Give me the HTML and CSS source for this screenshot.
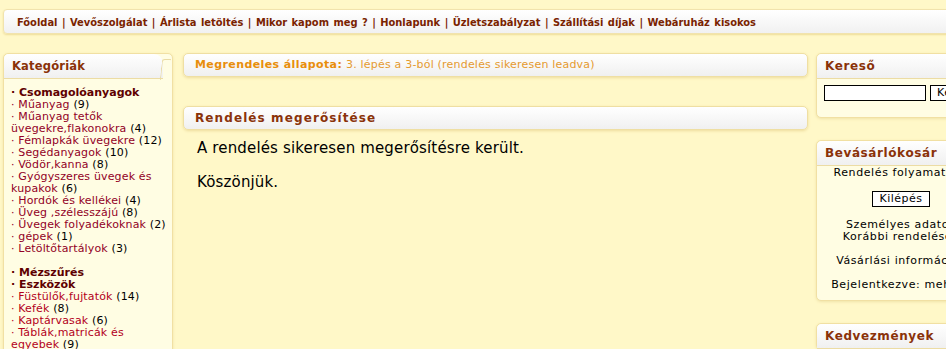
FILE: index.html
```html
<!DOCTYPE html>
<html lang="hu">
<head>
    <meta charset="UTF-8">
    <title>Rendelés megerősítése</title>
    <link rel="stylesheet" href="styles.css">
</head>
<body>
    <div class="topnav">
        <a href="#">Főoldal</a> |
        <a href="#">Vevőszolgálat</a> |
        <a href="#">Árlista letöltés</a> |
        <a href="#">Mikor kapom meg ?</a> |
        <a href="#">Honlapunk</a> |
        <a href="#">Üzletszabályzat</a> |
        <a href="#">Szállítási díjak</a> |
        <a href="#">Webáruház kisokos</a>
    </div>

    <div class="page">
        <!-- Left column -->
        <div class="col-left">
            <div class="box">
                <div class="box-head tab">Kategóriák</div>
                <ul class="cats">
                    <li class="main">· Csomagolóanyagok</li>
                    <li><a href="#">· Műanyag</a> (9)</li>
                    <li><a href="#">· Műanyag tetők üvegekre,flakonokra</a> (4)</li>
                    <li><a href="#">· Fémlapkák üvegekre</a> (12)</li>
                    <li><a href="#">· Segédanyagok</a> (10)</li>
                    <li><a href="#">· Vödör,kanna</a> (8)</li>
                    <li><a href="#">· Gyógyszeres üvegek és kupakok</a> (6)</li>
                    <li><a href="#">· Hordók és kellékei</a> (4)</li>
                    <li><a href="#">· Üveg ,szélesszájú</a> (8)</li>
                    <li><a href="#">· Üvegek folyadékoknak</a> (2)</li>
                    <li><a href="#">· gépek</a> (1)</li>
                    <li><a href="#">· Letöltőtartályok</a> (3)</li>
                    <li class="main spaced">· Mézszűrés</li>
                    <li class="main">· Eszközök</li>
                    <li><a href="#" class="red">· Füstülők,fujtatók</a> (14)</li>
                    <li><a href="#" class="red">· Kefék</a> (8)</li>
                    <li><a href="#" class="red">· Kaptárvasak</a> (6)</li>
                    <li><a href="#" class="red">· Táblák,matricák és egyebek</a> (9)</li>
                </ul>
            </div>
        </div>

        <!-- Center column -->
        <div class="col-center">
            <div class="bar status"><b>Megrendeles állapota:</b> 3. lépés a 3-ból (rendelés sikeresen leadva)</div>
            <div class="bar title">Rendelés megerősítése</div>
            <div class="message">
                <p>A rendelés sikeresen megerősítésre került.</p>
                <p>Köszönjük.</p>
            </div>
        </div>

        <!-- Right column -->
        <div class="col-right">
            <div class="box">
                <div class="box-head">Kereső</div>
                <div class="search">
                    <input type="text" class="search-input">
                    <button class="btn">Keresés</button>
                </div>
            </div>
            <div class="box">
                <div class="box-head">Bevásárlókosár</div>
                <div class="cart">
                    <p>Rendelés folyamatban</p>
                    <p><button class="btn">Kilépés</button></p>
                    <p>Személyes adatok<br>Korábbi rendelések</p>
                    <p>Vásárlási információk</p>
                    <p>Bejelentkezve: mehesz</p>
                </div>
            </div>
            <div class="box">
                <div class="box-head">Kedvezmények</div>
            </div>
        </div>
    </div>
</body>
</html>
```

FILE: styles.css
```css
body {
    margin: 0;
    padding: 0;
    background-color: #fff8c8;
    font-family: "DejaVu Sans", Verdana, sans-serif;
    font-size: 11px;
    color: #000;
    width: 990px;
    height: 349px;
    overflow: hidden;
}
a {
    text-decoration: none;
}

/* Top navigation */
.topnav {
    margin: 9px 0 0 3px;
    height: 23px;
    line-height: 25px;
    padding-left: 13px;
    background: linear-gradient(#ffffff, #f1f1f1);
    border: 1px solid #f1e3ad;
    border-radius: 4px 0 0 4px;
    box-shadow: 0 1px 2px #eedd99;
    font-family: "DejaVu Sans Condensed", "DejaVu Sans", sans-serif;
    font-weight: bold;
    color: #7a2300;
    word-spacing: 1px;
}
.topnav a {
    color: #7a2300;
}

.page {
    display: flex;
    padding: 19px 0 0 3px;
    gap: 10px;
}

/* Boxes */
.box {
    background-color: #fffde3;
    border: 1px solid #f1e0a3;
    border-radius: 5px;
    box-shadow: 0 1px 3px #f0e3a8;
}
.box-head {
    height: 24px;
    line-height: 24px;
    padding-left: 8px;
    background: linear-gradient(#ffffff, #f0f0f0);
    border-bottom: 1px solid #ecdca4;
    border-radius: 5px 5px 0 0;
    font-size: 12px;
    font-weight: bold;
    letter-spacing: 0.6px;
    color: #8a3209;
}
.box-head.tab {
    margin-right: 9px;
    border-radius: 5px 9px 0 0;
    position: relative;
    font-size: 11.5px;
    letter-spacing: 0.2px;
}
.box-head.tab::after {
    content: "";
    position: absolute;
    right: -8px;
    top: 5px;
    width: 8px;
    height: 20px;
    border-left: 1px solid #e9dba4;
    border-top: 1px solid #e9dba4;
    border-radius: 3px 0 0 0;
    transform: skewX(-6deg);
    transform-origin: top left;
}

/* Left column */
.col-left {
    width: 170px;
    flex-shrink: 0;
}
.col-left .box {
    min-height: 320px;
}
.cats {
    list-style: none;
    margin: 0;
    padding: 8px 3px 0 7px;
    line-height: 12px;
    letter-spacing: 0.15px;
    font-size: 11px;
}
.cats li.main {
    font-weight: bold;
    color: #5e0000;
    letter-spacing: 0;
}
.cats li.spaced {
    margin-top: 12px;
}
.cats a {
    color: #920026;
}
.cats a.red {
    color: #b3001b;
}

/* Center column */
.col-center {
    width: 625px;
    flex-shrink: 0;
}
.bar {
    height: 22px;
    line-height: 22px;
    padding-left: 11px;
    background: linear-gradient(#ffffff, #f0f0f0);
    border: 1px solid #efdfa3;
    border-radius: 5px;
    box-shadow: 0 1px 3px #eedc9c;
    font-size: 11px;
    letter-spacing: 0.2px;
}
.status {
    color: #e59a30;
}
.status b {
    color: #e88e0c;
    letter-spacing: 0.4px;
}
.title {
    margin-top: 29px;
    font-weight: bold;
    font-size: 12px;
    color: #8a3209;
    letter-spacing: 1.1px;
}
.message {
    padding: 3px 0 0 14px;
    font-size: 15px;
    letter-spacing: 0.15px;
}
.message p {
    margin: 7px 0 0;
    line-height: 17px;
}
.message p + p {
    margin-top: 17px;
}

/* Right column */
.col-right {
    width: 170px;
    flex-shrink: 0;
    margin-left: -2px;
    display: flex;
    flex-direction: column;
    gap: 22px;
}
.search {
    display: flex;
    gap: 4px;
    padding: 6px 7px 16px 7px;
}
.search-input {
    width: 100px;
    height: 14px;
    padding: 0;
    border: 1px solid #000;
    background: #fff;
}
.btn {
    font-family: "DejaVu Sans", Verdana, sans-serif;
    font-size: 11px;
    letter-spacing: 0.5px;
    background: #fff;
    border: 1px solid #000;
    padding: 0 6px;
    height: 16px;
    line-height: 14px;
}
.cart {
    text-align: center;
    padding: 1px 0 9px;
    letter-spacing: 0.6px;
    line-height: 12px;
}
.cart p {
    margin: 0 0 12px;
}
.cart p .btn {
    display: block;
    margin: 0 auto;
}
.cart p:last-child {
    margin-bottom: 0;
}
```
